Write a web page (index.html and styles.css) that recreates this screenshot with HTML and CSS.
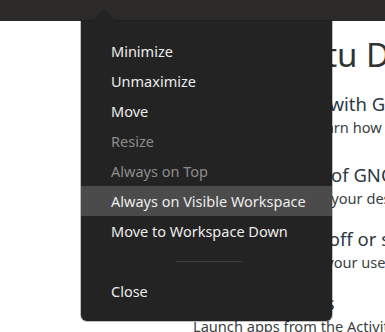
FILE: index.html
```html
<!DOCTYPE html>
<html lang="en">
<head>
<meta charset="utf-8">
<title>Window menu</title>
<link rel="stylesheet" href="styles.css">
</head>
<body>
<div class="topbar"></div>
<main class="page">
  <h1 class="heading">
    <svg class="logo" width="26" height="26" viewBox="0 0 26 26"><rect x="2" y="3" width="22" height="20" rx="3" fill="#c7512a"/><rect x="6" y="7" width="14" height="12" rx="1" fill="#f3d2c4"/></svg>
    <span>Ubuntu Desktop Guide</span>
  </h1>
  <ul class="topics">
    <li class="topic topic--first">
      <div class="topic-title">Getting started with GNOME</div>
      <div class="topic-desc">New to GNOME? Learn how to get around.</div>
    </li>
    <li class="topic">
      <div class="topic-title">Visual overview of GNOME</div>
      <div class="topic-desc">A visual overview of your desktop</div>
    </li>
    <li class="topic">
      <div class="topic-title">Log out, power off or switch users</div>
      <div class="topic-desc">Learn how to leave your user account</div>
    </li>
    <li class="topic">
      <div class="topic-title">Launch my apps</div>
      <div class="topic-desc">Launch apps from the Activities overview.</div>
    </li>
  </ul>
</main>
<nav class="menu">
  <div class="menu-item">Minimize</div>
  <div class="menu-item">Unmaximize</div>
  <div class="menu-item">Move</div>
  <div class="menu-item is-disabled">Resize</div>
  <div class="menu-item is-disabled">Always on Top</div>
  <div class="menu-item is-hover">Always on Visible Workspace</div>
  <div class="menu-item">Move to Workspace Down</div>
  <div class="menu-separator"><span class="separator-line"></span></div>
  <div class="menu-item">Close</div>
</nav>
</body>
</html>
```
FILE: styles.css
```css
html, body {
  margin: 0;
  padding: 0;
}
body {
  width: 385px;
  height: 332px;
  overflow: hidden;
  background: #ffffff;
  position: relative;
  font-family: "Noto Sans", "Open Sans", sans-serif;
}
.topbar {
  height: 21px;
  background: #2c2929;
}
.page {
  padding-left: 193px;
  color: #2e3436;
  overflow: hidden;
}
.heading {
  margin: 14px 0 0 9px;
  display: flex;
  align-items: center;
  gap: 12px;
  font-size: 33px;
  line-height: 40px;
  font-weight: 400;
  white-space: nowrap;
  color: #2e3436;
}
.logo {
  flex: none;
}
.topics {
  list-style: none;
  margin: 18px 0 0;
  padding: 0;
  display: flex;
  flex-direction: column;
  gap: 20px;
  white-space: nowrap;
}
.topic--first {
  margin-bottom: 7px;
}
.topic-title {
  font-size: 18.5px;
  line-height: 22px;
  color: #2b3a45;
}
.topic-desc {
  margin-top: 2px;
  font-size: 14.6px;
  line-height: 20px;
  color: #3a3f41;
}
.menu {
  position: absolute;
  left: 81px;
  top: 21px;
  width: 251px;
  height: 300px;
  box-sizing: border-box;
  padding: 15px 0;
  background: #232323;
  border-radius: 0 0 6px 6px;
  box-shadow: 0 0 0 1px rgba(0, 0, 0, 0.25);
  font-family: "Noto Sans", "Open Sans", sans-serif;
  font-size: 14.5px;
  color: #ececec;
}
.menu::before {
  content: "";
  position: absolute;
  left: 11px;
  top: -12px;
  width: 24px;
  height: 12px;
  background: #232323;
  clip-path: polygon(50% 0, 100% 100%, 0 100%);
}
.menu-item {
  height: 30px;
  line-height: 30px;
  padding-left: 30px;
  white-space: nowrap;
}
.menu-item.is-disabled {
  color: #8c8c8c;
}
.menu-item.is-hover {
  background: #4b4b4b;
}
.menu-separator {
  height: 30px;
  display: flex;
  align-items: center;
  padding-left: 95px;
}
.separator-line {
  width: 66px;
  height: 1px;
  background: #3d3d3d;
}
```
